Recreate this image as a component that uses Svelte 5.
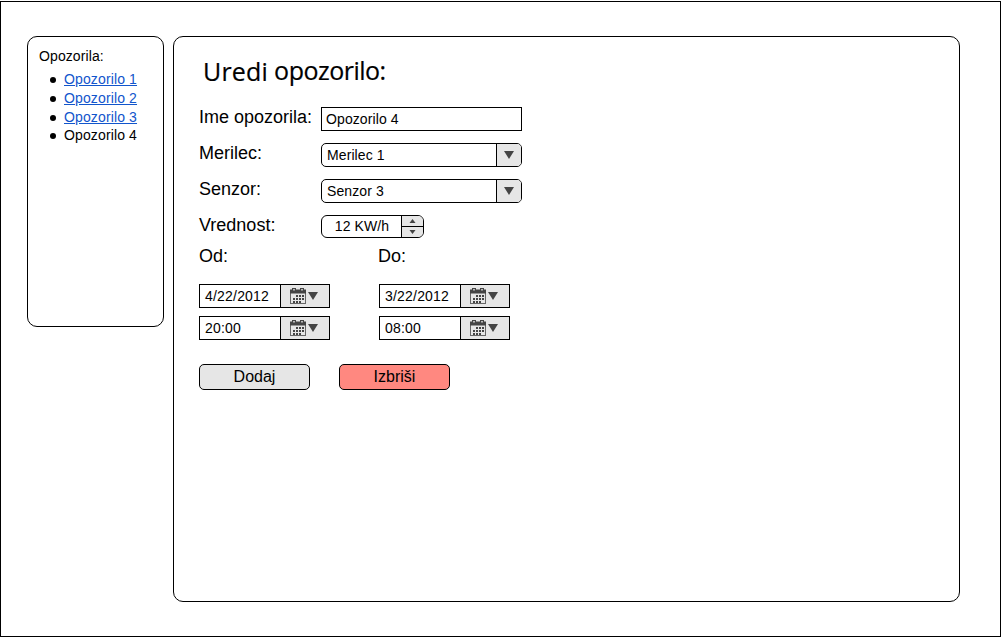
<script>
  const links = [1, 2, 3];
  const ranges = [
    { label: 'Od:', values: ['4/22/2012', '20:00'] },
    { label: 'Do:', values: ['3/22/2012', '08:00'] }
  ];
  const selects = [
    { label: 'Merilec:', value: 'Merilec 1' },
    { label: 'Senzor:', value: 'Senzor 3' }
  ];
  const dots = [
    [6, 7], [9, 7], [12, 7],
    [3, 10], [6, 10], [9, 10], [12, 10],
    [3, 13], [6, 13], [9, 13]
  ];
</script>

<div class="window">
  <aside class="panel side">
    <div class="side-title">Opozorila:</div>
    <ul>
      {#each links as n}
        <li><span class="link">Opozorilo {n}</span></li>
      {/each}
      <li class="current"><span>Opozorilo 4</span></li>
    </ul>
  </aside>

  <main class="panel content">
    <h1><span class="first">Uredi</span> <span class="second">opozorilo:</span></h1>

    <div class="row">
      <span class="label name">Ime opozorila:</span>
      <div class="field text">Opozorilo 4</div>
    </div>
    {#each selects as s}
      <div class="row">
        <span class="label">{s.label}</span>
        <div class="field select">
          <span class="value">{s.value}</span>
          <span class="arrow"><svg width="24" height="22"><path d="M7 7H17L12 15Z" fill="#444" /></svg></span>
        </div>
      </div>
    {/each}
    <div class="row">
      <span class="label">Vrednost:</span>
      <div class="field stepper">
        <span class="value">12 KW/h</span>
        <span class="steps">
          <svg width="21" height="10"><path d="M7.500 7H13.500L10.500 3Z" fill="#444" /></svg>
          <svg width="21" height="10"><path d="M7.500 3H13.500L10.500 7Z" fill="#444" /></svg>
        </span>
      </div>
    </div>

    <div class="ranges">
      {#each ranges as r}
        <div class="range">
          <div class="range-label">{r.label}</div>
          {#each r.values as v}
            <div class="date">
              <span class="value">{v}</span>
              <span class="picker">
                <svg width="48" height="22">
                  <g transform="translate(9 3)">
                    <rect x="0.500" y="2.500" width="15" height="13" fill="#e6e6e6" stroke="#666" />
                    <rect x="0" y="1.500" width="16" height="4" fill="#444" />
                    <rect x="2.500" y="0.500" width="3" height="2.500" fill="#bbb" stroke="#444" />
                    <rect x="10.500" y="0.500" width="3" height="2.500" fill="#bbb" stroke="#444" />
                    {#each dots as [x, y]}
                      <rect {x} {y} width="2" height="2" fill="#444" />
                    {/each}
                  </g>
                  <path d="M27 7H37L32 15Z" fill="#444" />
                </svg>
              </span>
            </div>
          {/each}
        </div>
      {/each}
    </div>

    <div class="buttons">
      <button>Dodaj</button>
      <button class="danger">Izbriši</button>
    </div>
  </main>
</div>

<style>
  :global(body) {
    margin: 0;
    background: #fff;
  }
  :global(#app) {
    display: flow-root;
  }
  .window, .window * {
    box-sizing: border-box;
  }
  .window {
    display: flex;
    align-items: flex-start;
    gap: 9px;
    width: 1001px;
    height: 636px;
    margin-top: 1px;
    padding: 34px 26px;
    border: 1px solid #000;
    font-family: "Liberation Sans", Arial, sans-serif;
    color: #000;
    white-space: nowrap;
  }
  .panel {
    border: 1px solid #000;
    border-radius: 10px;
    flex: none;
  }
  .side {
    width: 137px;
    height: 291px;
    padding: 10px 11px;
    font-size: 14px;
    letter-spacing: 0.130px;
  }
  .side-title {
    line-height: 18px;
    letter-spacing: 0.100px;
  }
  ul {
    list-style: none;
    margin: 5px 0 0;
    padding: 0 0 0 11px;
  }
  li {
    display: flex;
    align-items: center;
    gap: 8px;
    height: 19px;
  }
  li span {
    padding-bottom: 2px;
  }
  li.current {
    height: 18px;
  }
  li::before {
    content: "";
    width: 6px;
    height: 6px;
    border-radius: 50%;
    background: #000;
  }
  .link {
    color: #1155cc;
    text-decoration: underline;
  }
  .content {
    width: 787px;
    height: 566px;
    padding: 17px 25px;
  }
  h1 {
    display: flex;
    gap: 6px;
    height: 53px;
    margin: 0;
    padding-left: 4px;
    font: 400 25px/34px "Open Sans", sans-serif;
  }
  .first {
    letter-spacing: 0.200px;
    -webkit-text-stroke: 0.200px #000;
  }
  .second {
    line-height: 32px;
    letter-spacing: -0.500px;
    -webkit-text-stroke: 0.200px #000;
  }
  .row {
    display: flex;
    height: 36px;
  }
  .label {
    width: 122px;
    font-size: 18px;
    line-height: 20px;
  }
  .field {
    display: flex;
    height: 24px;
    border: 1px solid #000;
    font-size: 14px;
    line-height: 22px;
    letter-spacing: 0.100px;
    overflow: hidden;
  }
  .text {
    width: 201px;
    padding-left: 4px;
  }
  .select {
    width: 201px;
    border-radius: 5px;
  }
  .value {
    flex: 1;
    padding-left: 5px;
  }
  .arrow, .picker {
    flex: none;
    border-left: 1px solid #000;
    background: #e6e6e6;
  }
  svg {
    display: block;
  }
  .stepper {
    width: 103px;
    height: 23px;
    border-radius: 6px;
    line-height: 21px;
  }
  .stepper .value {
    text-align: center;
    padding-left: 1px;
  }
  .steps {
    border-left: 1px solid #000;
    background: #e6e6e6;
  }
  .steps svg + svg {
    border-top: 1px solid #000;
    height: 11px;
  }
  .ranges {
    display: flex;
    gap: 49px;
    margin-top: -5px;
  }
  .range {
    width: 131px;
  }
  .range-label {
    height: 38px;
    font-size: 18px;
    line-height: 20px;
  }
  .range + .range .range-label {
    margin-left: -1px;
  }
  .date {
    display: flex;
    height: 24px;
    margin-bottom: 8px;
    border: 1px solid #000;
    font-size: 14px;
    line-height: 22px;
    letter-spacing: 0.200px;
  }
  .buttons {
    display: flex;
    gap: 29px;
    margin-top: 16px;
  }
  button {
    width: 111px;
    height: 26px;
    padding: 0;
    border: 1px solid #000;
    border-radius: 5px;
    background: #e6e6e6;
    font: 16px/24px "Liberation Sans", Arial, sans-serif;
    color: #000;
  }
  .danger {
    background: #ff8880;
  }
</style>
